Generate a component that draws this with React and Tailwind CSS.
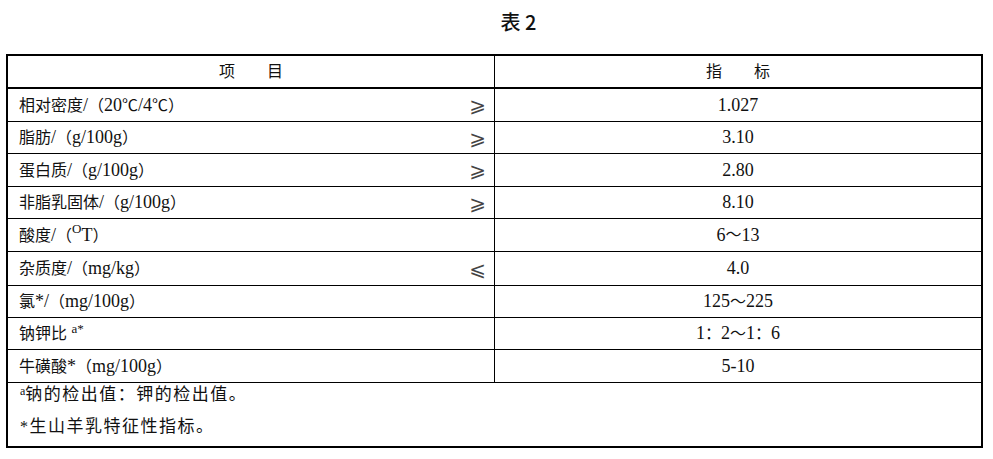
import React from "react";

// CJK run: smaller than the Latin text around it
function Z({ children }) {
  return <span className="text-[16px]">{children}</span>;
}

// full-width glyph forced into the CJK font
function W({ children }) {
  return (
    <span className="text-[16px] font-['Noto_Sans_CJK_SC',sans-serif]">
      {children}
    </span>
  );
}

const rows = [
  {
    h: "h-[33px]",
    label: (
      <>
        <Z>相对密度</Z>/<Z>（</Z>20<W>℃</W>/4<W>℃</W>
        <Z>）</Z>
      </>
    ),
    sign: "⩾",
    value: "1.027",
  },
  {
    h: "h-[32px]",
    label: (
      <>
        <Z>脂肪</Z>/<Z>（</Z>g/100g<Z>）</Z>
      </>
    ),
    sign: "⩾",
    value: "3.10",
  },
  {
    h: "h-[33px]",
    label: (
      <>
        <Z>蛋白质</Z>/<Z>（</Z>g/100g<Z>）</Z>
      </>
    ),
    sign: "⩾",
    value: "2.80",
  },
  {
    h: "h-[32px]",
    label: (
      <>
        <Z>非脂乳固体</Z>/<Z>（</Z>g/100g<Z>）</Z>
      </>
    ),
    sign: "⩾",
    value: "8.10",
  },
  {
    h: "h-[33px]",
    label: (
      <>
        <Z>酸度</Z>/<Z>（</Z>
        <sup className="text-[13px] top-[-0.55em]">O</sup>T<Z>）</Z>
      </>
    ),
    sign: "",
    value: (
      <>
        6<Z>～</Z>13
      </>
    ),
  },
  {
    h: "h-[34px]",
    label: (
      <>
        <Z>杂质度</Z>/<Z>（</Z>mg/kg<Z>）</Z>
      </>
    ),
    sign: "⩽",
    value: "4.0",
  },
  {
    h: "h-[32px]",
    label: (
      <>
        <Z>氯</Z>*/<Z>（</Z>mg/100g<Z>）</Z>
      </>
    ),
    sign: "",
    value: (
      <>
        125<Z>～</Z>225
      </>
    ),
  },
  {
    h: "h-[32px]",
    label: (
      <>
        <Z>钠钾比</Z> <sup className="text-[13px] top-[-0.45em]">a*</sup>
      </>
    ),
    sign: "",
    value: (
      <>
        1<Z>：</Z>2<Z>～</Z>1<Z>：</Z>6
      </>
    ),
  },
  {
    h: "h-[33px]",
    label: (
      <>
        <Z>牛磺酸</Z>*<Z>（</Z>mg/100g<Z>）</Z>
      </>
    ),
    sign: "",
    value: "5-10",
  },
];

export default function App() {
  return (
    <div className="w-[993px] h-[459px] bg-white text-[#111] font-['Liberation_Serif','Noto_Sans_CJK_SC',serif]">
      <div className="h-[54px] flex justify-center pl-[44px] pt-[8px]">
        <h2 className="text-[20px] leading-[28px] font-medium font-['Noto_Sans_CJK_SC',sans-serif]">
          表 2
        </h2>
      </div>

      <div className="ml-[6px] w-[977px] border-2 border-black">
        <div className="grid grid-cols-[487px_1fr] h-[33px] border-b-2 border-black text-[16px]">
          <div className="border-r border-black flex items-center justify-center">
            项　　目
          </div>
          <div className="flex items-center justify-center">指　　标</div>
        </div>

        {rows.map((r, i) => (
          <div
            key={i}
            className={`grid grid-cols-[487px_1fr] border-b border-black text-[18px] ${r.h}`}
          >
            <div className="border-r border-black flex items-center justify-between pl-[11px] pr-[8px]">
              <span>{r.label}</span>
              <span className="text-[20px] leading-none font-['DejaVu_Sans','Noto_Sans_CJK_SC',sans-serif] text-[#444]">
                {r.sign}
              </span>
            </div>
            <div className="flex items-center justify-center">{r.value}</div>
          </div>
        ))}

        <div className="h-[63px] pl-[12px] pt-[2px] text-[17px] tracking-[1.5px]">
          <div className="leading-[20px]">
            <sup className="text-[12px] tracking-normal top-[-0.4em]">a</sup>
            钠的检出值：钾的检出值。
          </div>
          <div className="leading-[20px] mt-[12px]">
            <span className="text-[16px]">*</span>生山羊乳特征性指标。
          </div>
        </div>
      </div>
    </div>
  );
}
